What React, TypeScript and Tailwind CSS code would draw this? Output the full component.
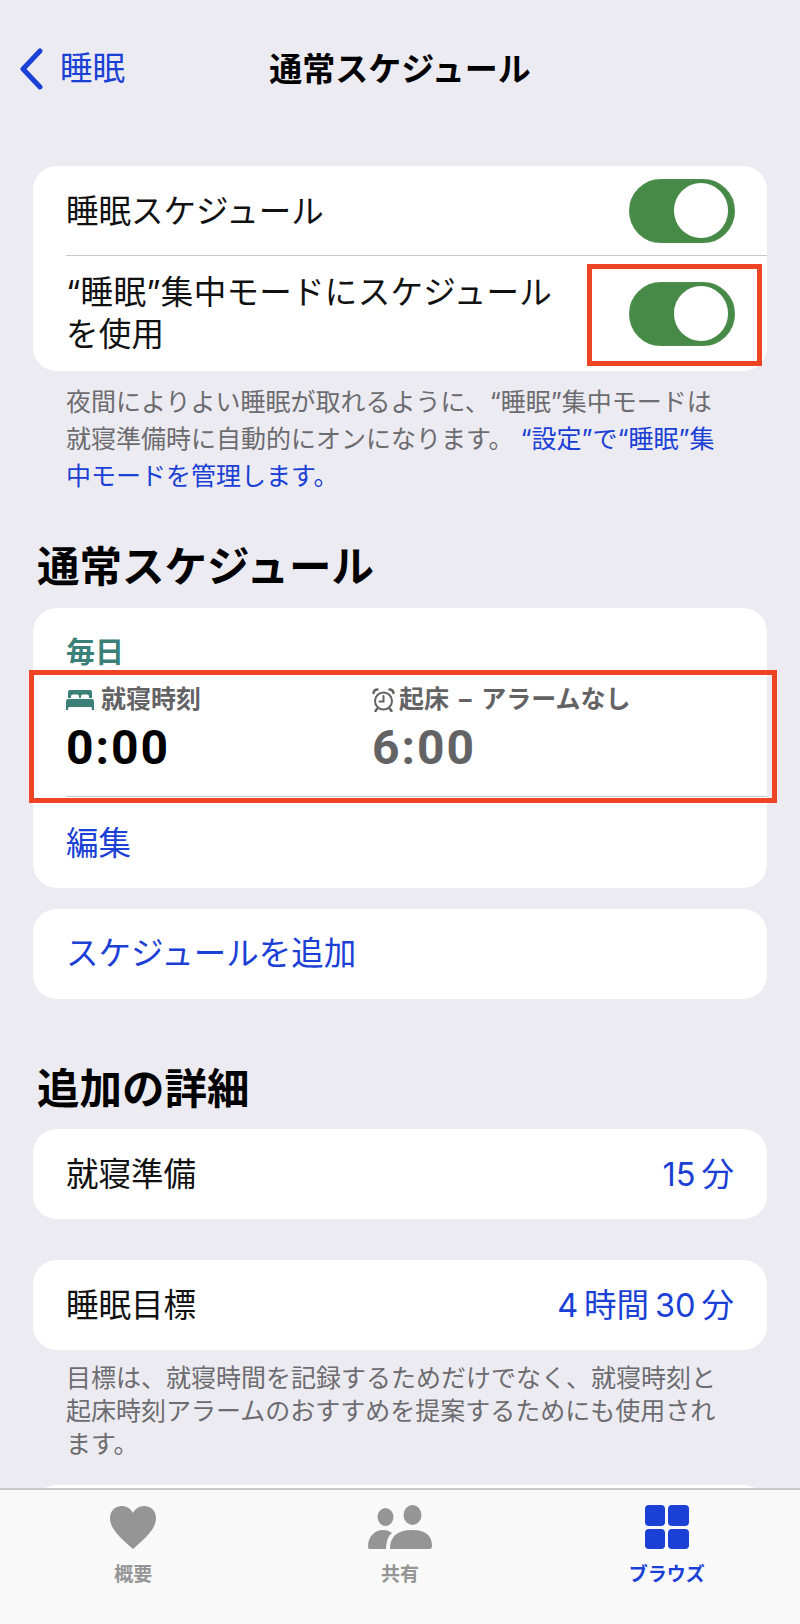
import React from "react";

const jp = "font-['Inter','Noto_Sans_CJK_JP',sans-serif]";

function Toggle() {
  return (
    <div className="flex h-16 w-[106px] items-center justify-end rounded-full border-2 border-[#4a8d4a] bg-[#478a47] pr-[5px]">
      <div className="h-[55px] w-[54px] rounded-full bg-white" />
    </div>
  );
}

function Heading({ children }: { children: React.ReactNode }) {
  return <h2 className="pl-[37px] text-[42.5px] leading-[56px] font-bold text-black">{children}</h2>;
}

function ValueRow({ label, value }: { label: string; value: string }) {
  return (
    <div className="mx-[33px] flex h-[90px] items-center justify-between rounded-[24px] bg-white pt-[2px] pr-[33px] pl-[33px]">
      <span className="text-[32.5px] text-[#111]">{label}</span>
      <span className="text-[32.5px] text-[#1a40d6]">{value}</span>
    </div>
  );
}

function TabItem({ label, active, children }: { label: string; active?: boolean; children: React.ReactNode }) {
  return (
    <div className="flex w-[267px] flex-col items-center">
      <div className="flex h-[48px] items-center justify-center">{children}</div>
      <span className={`mt-[10px] text-[19px] leading-[28px] font-bold ${active ? "text-[#1a40d6]" : "text-[#959595]"}`}>
        {label}
      </span>
    </div>
  );
}

export default function App() {
  return (
    <div className={`flex h-[1624px] w-[800px] flex-col overflow-hidden bg-[#ecebf1] ${jp}`}>
      <div className="min-h-0 flex-1 overflow-hidden">
        {/* Nav bar */}
        <div className="relative flex h-[140px] items-center justify-center">
          <div className="absolute top-[47px] left-[19px] flex items-center">
            <svg width="24" height="42" viewBox="0 0 24 42" fill="none">
              <path d="M21 3 L4 21 L21 39" stroke="#1a40d6" strokeWidth="5" strokeLinecap="round" strokeLinejoin="round" />
            </svg>
            <span className="ml-[17px] text-[32.5px] leading-[44px] text-[#1a40d6]">睡眠</span>
          </div>
          <span className="text-[33px] font-bold text-black">通常スケジュール</span>
        </div>

        {/* Sleep schedule toggles */}
        <div className="mx-[33px] mt-[26px] rounded-[24px] bg-white pl-[33px]">
          <div className="flex h-[90px] items-center justify-between border-b border-[#c8c8cc] pr-[32px]">
            <span className="mt-[3px] text-[32.5px] text-[#111]">睡眠スケジュール</span>
            <Toggle />
          </div>
          <div className="relative flex h-[115px] items-center justify-between pr-[32px]">
            <span className="w-[510px] text-[32.5px] leading-[42px] tracking-[0.3px] text-[#111]">“睡眠”集中モードにスケジュールを使用</span>
            <Toggle />
            <div className="absolute top-[8px] right-[5px] h-[102px] w-[175px] border-[5px] border-[#ef4423]" />
          </div>
        </div>
        <p className="mx-[66px] mt-[13px] text-[25px] leading-[37px] text-[#6c6c70]">
          夜間によりよい睡眠が取れるように、“睡眠”集中モードは就寝準備時に自動的にオンになります。
          <span className="text-[#1a40d6]"> “設定”で“睡眠”集中モードを管理します。</span>
        </p>

        <div className="mt-[44px]">
          <Heading>通常スケジュール</Heading>
        </div>

        {/* Schedule card */}
        <div className="mx-[33px] mt-[13px] rounded-[24px] bg-white pl-[33px]">
          <div className="pt-[26px] text-[29px] leading-[38px] font-semibold text-[#3a7f78]">毎日</div>
          <div className="relative flex h-[125px] border-b border-[#c8c8cc] pt-[13px]">
            <div className="w-[306px]">
              <div className="flex h-[30px] items-center">
                <svg width="28" height="20" viewBox="0 0 28 20" fill="#3a7f78">
                  <path d="M4 0 H24 Q26 0 26 2 V8 H23 V6 Q23 4.500 21 4.500 H17 Q15 4.500 15 6 V8 H13 V6 Q13 4.500 11 4.500 H7 Q5 4.500 5 6 V8 H2 V2 Q2 0 4 0 Z" />
                  <path d="M2 9 H26 Q28 9 28 12 V20 H26 L25.500 17 H2.500 L2 20 H0 V12 Q0 9 2 9 Z" />
                </svg>
                <span className="ml-[7px] text-[25px] font-bold text-[#636366]">就寝時刻</span>
              </div>
              <div className="mt-[4px] font-['Roboto'] text-[48px] leading-[58px] font-bold tracking-[2px] text-black">0:00</div>
            </div>
            <div>
              <div className="flex h-[30px] items-center">
                <svg width="23" height="24" viewBox="0 0 23 24" fill="none" stroke="#636366" strokeWidth="2" strokeLinecap="round">
                  <circle cx="11.500" cy="13" r="8.500" />
                  <path d="M11.500 8 V13.500 H7.500" />
                  <path d="M1.500 5 Q2 1.500 5.500 1.500 M21.500 5 Q21 1.500 17.500 1.500 M5 21 L3.500 23 M18 21 L19.500 23" strokeWidth="2.500" />
                </svg>
                <span className="ml-[4px] text-[25px] font-bold [word-spacing:4px] text-[#636366]">起床 – アラームなし</span>
              </div>
              <div className="mt-[4px] font-['Roboto'] text-[48px] leading-[58px] font-bold tracking-[2px] text-[#636366]">6:00</div>
            </div>
            <div className="absolute top-[-2px] right-[-10px] bottom-[-7px] left-[-37px] border-[5px] border-[#ef4423]" />
          </div>
          <div className="flex h-[91px] items-center pt-[3px] text-[32.5px] text-[#1a40d6]">編集</div>
        </div>

        <div className="mx-[33px] mt-[21px] flex h-[90px] items-center rounded-[24px] bg-white pl-[33px] text-[32.5px] text-[#1a40d6]">
          スケジュールを追加
        </div>

        <div className="mt-[62px]">
          <Heading>追加の詳細</Heading>
        </div>

        <div className="mt-[12px]">
          <ValueRow label="就寝準備" value={"15\u2009分"} />
        </div>
        <div className="mt-[41px]">
          <ValueRow label="睡眠目標" value={"4\u2009時間\u200930\u2009分"} />
        </div>
        <p className="mx-[66px] mt-[12px] text-[25px] leading-[33px] text-[#6c6c70]">
          目標は、就寝時間を記録するためだけでなく、就寝時刻と起床時刻アラームのおすすめを提案するためにも使用されます。
        </p>
        <div className="mx-[33px] mt-[24px] h-[60px] rounded-[24px] bg-white" />
      </div>

      {/* Tab bar */}
      <div className="flex h-[136px] shrink-0 border-t-2 border-[#c9c9cc] bg-[#f9f9f9] pt-[13px]">
        <TabItem label="概要">
          <svg width="48" height="44" viewBox="0 0 48 44" fill="#959595">
            <path d="M24 44 C14 35 1 25 1 13 C1 5 7 1 13 1 C18 1 22 4 24 8 C26 4 30 1 35 1 C41 1 47 5 47 13 C47 25 34 35 24 44 Z" />
          </svg>
        </TabItem>
        <TabItem label="共有">
          <svg width="64" height="44" viewBox="0 0 64 44" fill="#959595">
            <ellipse cx="17.500" cy="12" rx="8" ry="9" />
            <ellipse cx="44.500" cy="10" rx="9" ry="10" />
            <path d="M0 42 C0 31 7 25 15 25 C19 25 21 26 24 28 C20 31 18 37 18 44 H2 Q0 44 0 42 Z" />
            <path d="M22 44 Q22 25 44 25 Q64 25 64 41 Q64 44 61 44 Z" />
          </svg>
        </TabItem>
        <TabItem label="ブラウズ" active>
          <div className="grid h-[44px] w-[44px] grid-cols-2 gap-[3px]">
            <div className="rounded-[4px] bg-[#1a40d6]" />
            <div className="rounded-[4px] bg-[#1a40d6]" />
            <div className="rounded-[4px] bg-[#1a40d6]" />
            <div className="rounded-[4px] bg-[#1a40d6]" />
          </div>
        </TabItem>
      </div>
    </div>
  );
}
